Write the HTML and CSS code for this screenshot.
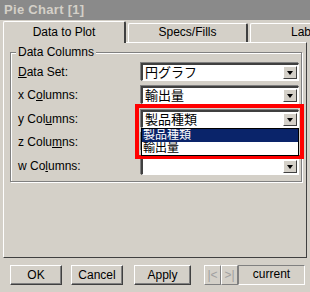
FILE: index.html
```html
<!DOCTYPE html>
<html lang="en">
<head>
    <meta charset="UTF-8">
    <title>Pie Chart [1]</title>
    <link rel="stylesheet" href="styles.css">
</head>
<body>
    <div class="win">
        <div class="title">Pie Chart [1]</div>

        <div class="tabs">
            <div class="tab active">Data to Plot</div>
            <div class="tab">Specs/Fills</div>
            <div class="tab last">Labels</div>
        </div>

        <div class="panel">
            <div class="group">
                <span class="legend">Data Columns</span>
                <div class="row">
                    <span class="lbl"><u>D</u>ata Set:</span>
                    <div class="combo"><span class="val">円グラフ</span><span class="arr"></span></div>
                </div>
                <div class="row">
                    <span class="lbl">x C<u>o</u>lumns:</span>
                    <div class="combo"><span class="val">輸出量</span><span class="arr"></span></div>
                </div>
                <div class="row">
                    <span class="lbl">y Col<u>u</u>mns:</span>
                    <div class="combo"><span class="val">製品種類</span><span class="arr"></span></div>
                </div>
                <div class="row">
                    <span class="lbl">z Colu<u>m</u>ns:</span>
                    <div class="combo"><span class="val"></span><span class="arr"></span></div>
                </div>
                <div class="row">
                    <span class="lbl">w Co<u>l</u>umns:</span>
                    <div class="combo"><span class="val"></span><span class="arr"></span></div>
                </div>

                <div class="mark"></div>
                <div class="list">
                    <div class="item sel">製品種類</div>
                    <div class="item">輸出量</div>
                </div>
            </div>
        </div>

        <div class="footer">
            <button class="btn">OK</button>
            <button class="btn">Cancel</button>
            <button class="btn apply">Apply</button>
            <div class="nav">
                <span class="navb">|&lt;</span><span class="navb">&gt;|</span>
            </div>
            <div class="cur">current</div>
        </div>
    </div>
</body>
</html>
```

FILE: styles.css
```css
body{
    margin: 0;
    background-color: #d4d0c8;
    font-family: "Liberation Sans", "Noto Sans CJK JP", sans-serif;
    font-size: 12px;
    color: #000;
}
.win{
    width: 310px;
    height: 292px;
    overflow: hidden;
}
.title{
    height: 20px;
    line-height: 20px;
    background-color: #8a8a8a;
    color: #d4d0c8;
    font-weight: bold;
    font-size: 13px;
    padding-left: 4px;
    letter-spacing: 0.3px;
}

.tabs{
    display: flex;
    align-items: flex-end;
    height: 22px;
    padding-left: 3px;
}
.tab{
    flex-shrink: 0;
    height: 18px;
    line-height: 17px;
    text-align: center;
    border-top: 1px solid #fff;
    border-left: 1px solid #fff;
    border-right: 2px solid #404040;
    width: 117px;
    margin-left: 2px;
    border-radius: 2px 2px 0 0;
}
.tab.active{
    height: 21px;
    line-height: 21px;
    width: 120px;
    margin-left: 0;
    margin-bottom: -1px;
    position: relative;
    background-color: #d4d0c8;
    z-index: 1;
}
.tab.last{
    width: 80px;
    text-align: left;
    padding-left: 40px;
}

.panel{
    box-sizing: border-box;
    margin: 0 3px;
    height: 216px;
    border-top: 1px solid #fff;
    border-left: 1px solid #fff;
    border-right: 1px solid #404040;
    border-bottom: 1px solid #404040;
    padding: 9px 0 0 6px;
}
.group{
    position: relative;
    width: 292px;
    height: 130px;
    padding: 7px 0 0 7px;
    border: 1px solid #808080;
    box-shadow: inset 1px 1px 0 #fff, 1px 1px 0 #fff;
    box-sizing: border-box;
}
.legend{
    position: absolute;
    left: 5px;
    top: -8px;
    padding: 0 2px;
    background-color: #d4d0c8;
}
.row{
    display: flex;
    align-items: center;
    height: 23.5px;
}
.lbl{
    width: 123px;
}
.combo{
    display: flex;
    width: 154px;
    height: 13px;
    background-color: #fff;
    border-top: 2px solid #404040;
    border-left: 2px solid #404040;
    border-right: 1px solid #fff;
    border-bottom: 1px solid #fff;
    box-shadow: -1px -1px 0 #808080;
    padding: 1px 1px 1px 0;
}
.val{
    flex: 1;
    line-height: 13px;
    padding-left: 2px;
    font-size: 13px;
}
.arr{
    width: 12px;
    height: 11px;
    background-color: #d4d0c8;
    border-top: 1px solid #fff;
    border-left: 1px solid #fff;
    border-right: 1px solid #404040;
    border-bottom: 1px solid #404040;
    position: relative;
}
.arr::after{
    content: "";
    position: absolute;
    left: 3px;
    top: 4px;
    border-left: 3px solid transparent;
    border-right: 3px solid transparent;
    border-top: 4px solid #000;
}

.mark{
    position: absolute;
    left: 124px;
    top: 51px;
    width: 161px;
    height: 47px;
    border: 4px solid #ff0000;
}
.list{
    position: absolute;
    left: 130px;
    top: 75px;
    width: 156px;
    height: 26px;
    background-color: #fff;
    border: 1px solid #000;
}
.item{
    height: 13px;
    line-height: 13px;
    font-size: 12px;
    padding-left: 1px;
    overflow: hidden;
}
.item.sel{
    background-color: #0a246a;
    color: #fff;
}

.footer{
    display: flex;
    align-items: center;
    padding: 7px 0 0 10px;
}
.btn{
    height: 20px;
    width: 52px;
    margin-right: 9px;
    font-family: "Liberation Sans", sans-serif;
    font-size: 12px;
    background-color: #d4d0c8;
    border-top: 1px solid #fff;
    border-left: 1px solid #fff;
    border-right: 1px solid #404040;
    border-bottom: 1px solid #404040;
    box-shadow: inset -1px -1px 0 #808080;
    padding: 0;
    color: #000;
}
.btn.apply{
    width: 57px;
    margin-left: 2px;
    margin-right: 13px;
}
.nav{
    display: flex;
    height: 20px;
}
.navb{
    width: 15px;
    height: 18px;
    line-height: 18px;
    text-align: center;
    color: #a0a0a0;
    border-top: 1px solid #fff;
    border-left: 1px solid #fff;
    border-right: 1px solid #808080;
    border-bottom: 1px solid #808080;
}
.cur{
    width: 65px;
    height: 18px;
    line-height: 17px;
    text-align: center;
    border-top: 1px solid #808080;
    border-left: 1px solid #808080;
    border-right: 1px solid #fff;
    border-bottom: 1px solid #fff;
}
```
